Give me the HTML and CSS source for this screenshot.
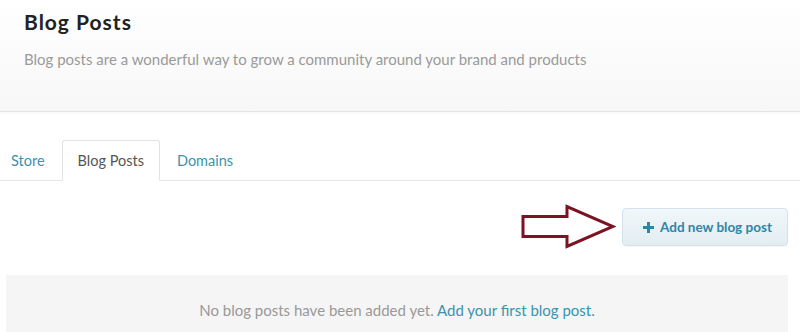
FILE: index.html
```html
<!DOCTYPE html>
<html lang="en">
<head>
  <meta charset="utf-8">
  <meta name="viewport" content="width=device-width">
  <title>Blog Posts</title>
  <link rel="stylesheet" href="styles.css">
</head>
<body>
  <!-- Page header -->
  <header class="page-header">
    <h1>Blog Posts</h1>
    <p>Blog posts are a wonderful way to grow a community around your brand and products</p>
  </header>

  <!-- Tabs -->
  <ul class="tabs">
    <li><a href="#">Store</a></li>
    <li class="active"><a href="#">Blog Posts</a></li>
    <li><a href="#">Domains</a></li>
  </ul>

  <div class="content">
    <div class="actions">
      <!-- annotation arrow -->
      <svg class="arrow" width="96" height="46" viewBox="0 0 96 46">
        <path d="M3 12.5 H47 V2.5 L93 22.5 L47 42.5 V32.5 H3 Z" fill="none" stroke="#7a1424" stroke-width="3" stroke-linejoin="miter"/>
      </svg>
      <button class="add-button">
        <svg width="11" height="11" viewBox="0 0 11 11">
          <path d="M4 0 H7 V4 H11 V7 H7 V11 H4 V7 H0 V4 H4 Z" fill="#2d86a8"/>
        </svg>
        Add new blog post
      </button>
    </div>

    <div class="empty">
      No blog posts have been added yet. <a href="#">Add your first blog post.</a>
    </div>
  </div>
</body>
</html>
```

FILE: styles.css
```css
/* Reset */
* {
  margin: 0;
  padding: 0;
  box-sizing: border-box;
}

body {
  font-family: Lato, 'Open Sans', sans-serif;
  color: #555;
  background: #fff;
}

a {
  color: #3b93ad;
  text-decoration: none;
}

/* Header */
.page-header {
  height: 112px;
  padding: 9px 24px 0;
  background: linear-gradient(to bottom, #ffffff, #f7f7f7);
  border-bottom: 1px solid #e4e4e4;
  box-shadow: 0 1px 2px rgba(0, 0, 0, 0.03);
}

.page-header h1 {
  font-size: 21px;
  line-height: 26px;
  font-weight: bold;
  letter-spacing: 1px;
  color: #222;
}

.page-header p {
  margin-top: 14px;
  font-size: 15px;
  line-height: 20px;
  color: #9a9a9a;
}

/* Tabs */
.tabs {
  list-style: none;
  display: flex;
  gap: 1px;
  margin-top: 28px;
  padding-left: 0;
  border-bottom: 1px solid #e6e6e6;
}

.tabs li {
  margin-bottom: -1px;
}

.tabs li:first-child {
  margin-left: -5px;
}

.tabs a {
  display: block;
  height: 41px;
  line-height: 39px;
  padding: 0 15px;
  font-size: 14.5px;
  border: 1px solid transparent;
  border-radius: 3px 3px 0 0;
}

.tabs .active a {
  color: #555;
  background: #fff;
  border-color: #e2e2e2;
  border-bottom-color: #fff;
}

/* Content */
.content {
  padding: 27px 12px 0 6px;
}

.actions {
  display: flex;
  justify-content: flex-end;
  align-items: center;
  gap: 6px;
}

.arrow {
  margin: -4px 0;
}

.add-button {
  display: flex;
  align-items: center;
  gap: 6px;
  width: 166px;
  height: 38px;
  padding-left: 20px;
  font-family: Lato, 'Open Sans', sans-serif;
  font-size: 13.5px;
  font-weight: bold;
  color: #2d86a8;
  background: linear-gradient(to bottom, #f1f7fa, #e2edf2);
  border: 1px solid #d3e2ea;
  border-radius: 4px;
  box-shadow: 0 1px 1px rgba(0, 0, 0, 0.04);
  cursor: pointer;
}

.empty {
  margin-top: 29px;
  height: 70px;
  padding-top: 26px;
  text-align: center;
  font-size: 15px;
  color: #999;
  background: #f5f5f5;
}
```
